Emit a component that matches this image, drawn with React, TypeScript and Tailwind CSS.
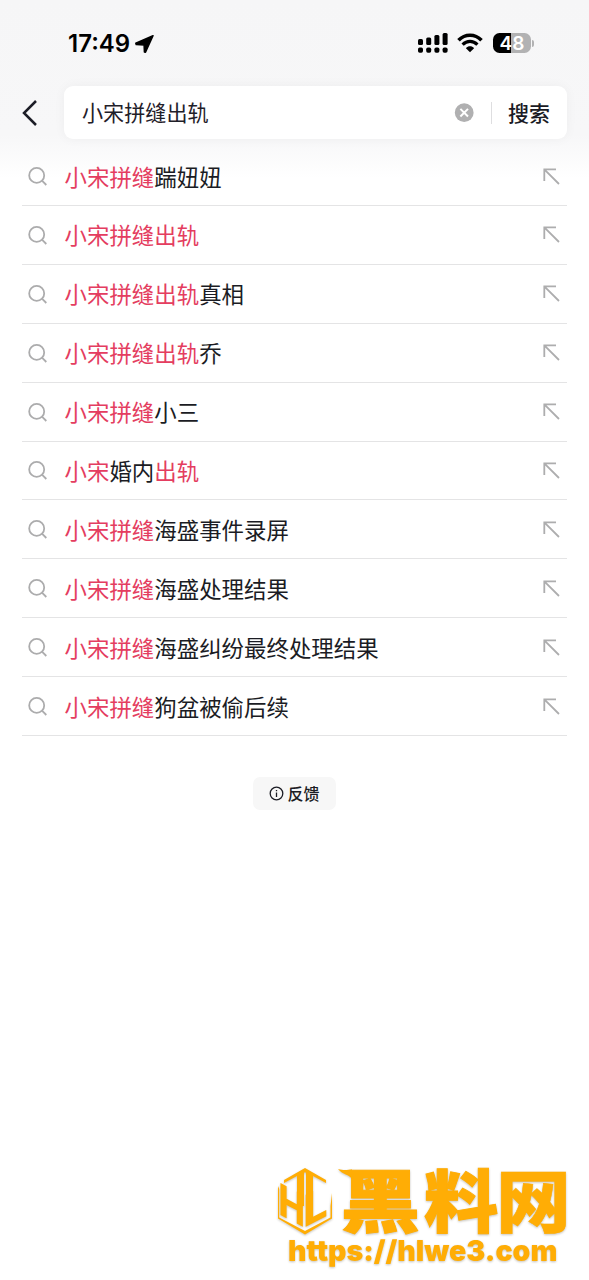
import { Fragment } from 'react'

type Part = { text: string; hit?: boolean }

const suggestions: Part[][] = [
  [{ text: '小宋拼缝', hit: true }, { text: '踹妞妞' }],
  [{ text: '小宋拼缝出轨', hit: true }],
  [{ text: '小宋拼缝出轨', hit: true }, { text: '真相' }],
  [{ text: '小宋拼缝出轨', hit: true }, { text: '乔' }],
  [{ text: '小宋拼缝', hit: true }, { text: '小三' }],
  [{ text: '小宋', hit: true }, { text: '婚内' }, { text: '出轨', hit: true }],
  [{ text: '小宋拼缝', hit: true }, { text: '海盛事件录屏' }],
  [{ text: '小宋拼缝', hit: true }, { text: '海盛处理结果' }],
  [{ text: '小宋拼缝', hit: true }, { text: '海盛纠纷最终处理结果' }],
  [{ text: '小宋拼缝', hit: true }, { text: '狗盆被偷后续' }],
]

function SignalIcon() {
  const bars = [
    { x: 0, y: 6, h: 6 },
    { x: 8.2, y: 4.5, h: 7.5 },
    { x: 16.4, y: 2, h: 10 },
    { x: 24.6, y: 0, h: 12 },
  ]
  return (
    <svg width="30" height="20" viewBox="0 0 30 20" fill="#000">
      {bars.map(b => (
        <Fragment key={b.x}>
          <rect x={b.x} y={b.y} width="5" height={b.h} rx="1.5" />
          <rect x={b.x} y="14.5" width="5" height="5.3" rx="1.7" />
        </Fragment>
      ))}
    </svg>
  )
}

function WifiIcon() {
  return (
    <svg width="26" height="20" viewBox="0 0 26 20" fill="none" stroke="#000">
      <path d="M1.5 7.2C8 .5 18 .5 24.5 7.2" strokeWidth="3.6" />
      <path d="M5.6 11.6C10 7.4 16 7.4 20.4 11.6" strokeWidth="3.3" />
      <path d="M8.9 15.2C11.2 12.6 14.8 12.6 17.1 15.2L13 19.2Z" fill="#000" stroke="none" />
    </svg>
  )
}

function StatusBar() {
  return (
    <div className="flex h-[86px] items-center justify-between pr-[55px] pl-[68px]">
      <div className="flex items-center gap-[5px] pt-[2px]">
        <span className="font-[Inter] text-[24px] leading-none font-semibold text-black">17:49</span>
        <svg width="19" height="19" viewBox="0 0 19 19" fill="#000" stroke="#000" strokeWidth="1.5" strokeLinejoin="round">
          <path d="M18 .8L.8 8.2L1.2 9.6L9.1 10.1L9.4 17L10.5 17.3Z" />
        </svg>
      </div>
      <div className="flex items-center gap-[9px]">
        <SignalIcon />
        <WifiIcon />
        <div className="ml-px flex items-center gap-px">
          <div className="flex h-5 w-[38px] items-center justify-center rounded-[6.5px] bg-[linear-gradient(90deg,#000_48%,#b2b2b3_48%)]">
            <span className="font-[Inter] text-[19px] leading-none font-semibold text-white">48</span>
          </div>
          <span className="h-[7px] w-[2px] rounded-r-full bg-[#b2b2b3]" />
        </div>
      </div>
    </div>
  )
}

function SearchHeader() {
  return (
    <div className="flex h-[53px] items-center px-[22px]">
      <svg className="shrink-0" width="16" height="28" viewBox="0 0 16 28" fill="none" stroke="#1c1d26" strokeWidth="2.5">
        <path d="M14 2L2 14L14 26" />
      </svg>
      <div className="ml-[26px] flex h-full flex-1 items-center rounded-[9px] bg-white pr-[17px] pl-[18px] shadow-[0_0_12px_rgba(0,0,0,0.045)]">
        <span className="flex-1 text-[21.1px] leading-none text-[#1f2029]">小宋拼缝出轨</span>
        <svg width="20" height="20" viewBox="0 0 20 20">
          <circle cx="10.2" cy="9.7" r="9.4" fill="#b0b0b1" />
          <path d="M6.4 5.9L14 13.5M14 5.9L6.4 13.5" stroke="#fff" strokeWidth="2" />
        </svg>
        <span className="ml-[17px] h-[22px] w-px bg-[#dedee0]" />
        <span className="ml-4 pb-px text-[21px] leading-none font-medium text-[#1a1b25]">搜索</span>
      </div>
    </div>
  )
}

function SuggestionRow({ parts }: { parts: Part[] }) {
  return (
    <li className="flex h-[58.9px] items-center border-b border-[#e4e4e5] pr-[7px] pl-[6px]">
      <svg className="shrink-0" width="20" height="20" viewBox="0 0 20 20" fill="none" stroke="#acacad" strokeWidth="1.8">
        <circle cx="8.7" cy="9.4" r="7.5" />
        <path d="M14 14.7L18.3 19" />
      </svg>
      <span className="ml-[16.5px] flex-1 pb-[0.5px] text-[22.45px] leading-none text-[#1b1c24]">
        {parts.map((p, i) => (
          <span key={i} className={p.hit ? 'text-[#e43d60]' : ''}>{p.text}</span>
        ))}
      </span>
      <svg width="17" height="17" viewBox="0 0 17 17" fill="none" stroke="#adadae" strokeWidth="1.8">
        <path d="M13 1.3H1.3V13M1.3 1.3L16 16" />
      </svg>
    </li>
  )
}

function Watermark() {
  return (
    <div className="absolute top-[1164px] left-[276px] w-[300px] text-[#ffad05] drop-shadow-[0_1px_1px_rgba(90,80,60,0.35)]">
      <div className="flex h-[72px]">
        <svg className="shrink-0 overflow-visible" width="58" height="72" viewBox="0 0 58 72" fill="currentColor">
          {/* hexagon frame with the two centre pillars */}
          <path d="M29 4L50 16V19L37 12V42H30V8.5H28V42H21V12L8 19V16Z" />
          <path d="M2 22L3.2 25V53.500L29 67L54.500 53.500V42L56 29V54.500L29 70.500L2 54.500Z" />
          <g fontFamily="Inter" fontWeight="800" fontSize="44">
            <text transform="matrix(.8 .42 0 1 2.4 50)">H</text>
            <text transform="matrix(.98 -.5 0 1 27.3 64)">L</text>
          </g>
        </svg>
        <svg className="shrink-0 overflow-visible" width="240" height="72" viewBox="0 0 240 72" fill="currentColor" stroke="currentColor">
          <g fontFamily="'Noto Sans CJK SC', sans-serif" fontWeight="900" fontSize="70">
            <text transform="translate(6.5 63) scale(1.14 .97)" strokeWidth="1">黑</text>
            <text transform="translate(90 63) scale(1.06 .97)" strokeWidth="1">料</text>
            <text transform="translate(162 63) scale(1.07 .97)" strokeWidth=".5">网</text>
          </g>
          <path d="M4 5C11 7 14 5.5 18 5.5V15C15 10 9 11 4 5Z" stroke="none" />
        </svg>
      </div>
      <div className="ml-[12px] font-[Inter] text-[28.5px] leading-[30px] font-black whitespace-nowrap">https://hlwe3.com</div>
    </div>
  )
}

export default function App() {
  return (
    <div className="relative h-[1280px] w-[589px] overflow-hidden bg-white font-['Noto_Sans_CJK_SC',sans-serif]">
      <div className="bg-[linear-gradient(180deg,#f6f6f7_0px,#f7f7f8_135px,#ffffff_178px)]">
        <StatusBar />
        <SearchHeader />
        <ul className="mx-[22px] pt-[8.1px]">
          {suggestions.map((parts, i) => (
            <SuggestionRow key={i} parts={parts} />
          ))}
        </ul>
      </div>
      <div className="mt-[41px] flex justify-center">
        <button className="flex h-[33px] w-[83px] items-center justify-center gap-[3px] rounded-[7px] bg-[#f7f7f7] text-[16px] font-medium text-[#1b1c24]">
          <svg width="15" height="15" viewBox="0 0 15 15" fill="none" stroke="#1b1c24" strokeWidth="1.3">
            <circle cx="7.5" cy="7.5" r="6.3" />
            <path d="M7.5 6.5V11M7.5 4V5.3" />
          </svg>
          <span className="pb-[2px]">反馈</span>
        </button>
      </div>
      <Watermark />
    </div>
  )
}
